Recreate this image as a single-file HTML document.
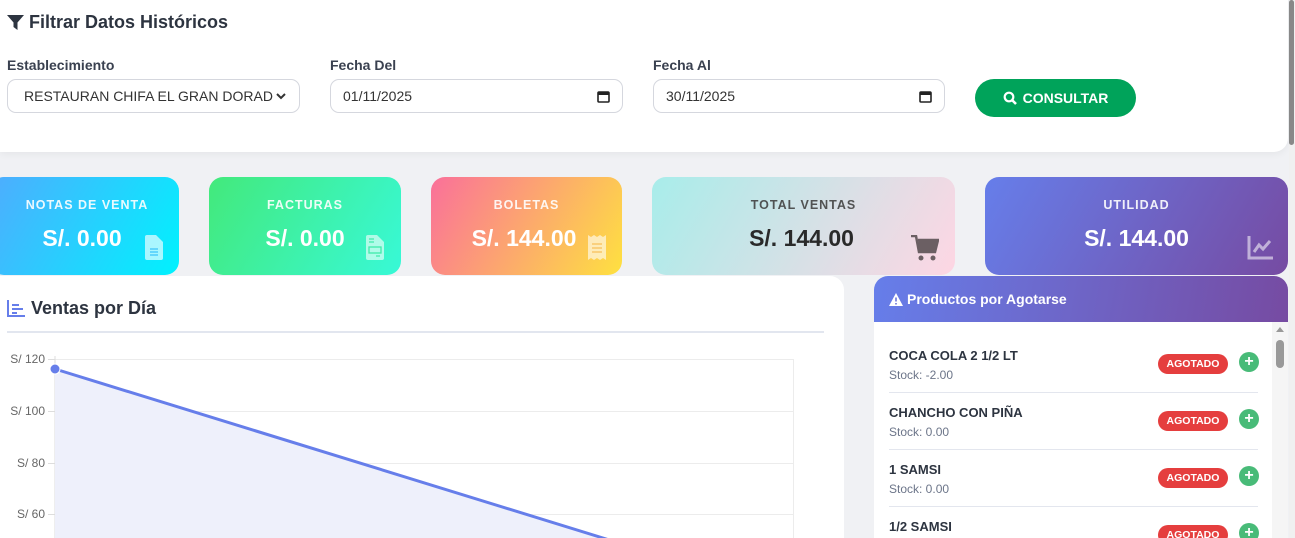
<!DOCTYPE html>
<html><head><meta charset="utf-8"><style>
*{box-sizing:border-box;margin:0;padding:0}
html,body{width:1295px;height:538px;overflow:hidden}
body{background:#f0f1f4;font-family:"Liberation Sans",Arial,sans-serif;position:relative}
.abs{position:absolute}
.filter{left:0;top:0;width:1288px;height:152px;background:#fff;border-radius:0 0 14px 0;box-shadow:0 2px 8px rgba(0,0,0,.05)}
.h{font-weight:bold;color:#2d3440;font-size:18px}
.lbl{font-size:14px;font-weight:bold;color:#3a4150}
.inp{height:34px;border:1px solid #d5d7de;border-radius:9px;background:#fff;font-size:14px;color:#333;padding:0 12px;display:flex;align-items:center;justify-content:space-between}
.btn{left:975px;top:79px;width:161px;height:38px;border-radius:19px;background:#00a35a;color:#fff;font-weight:bold;font-size:14px;display:flex;align-items:center;justify-content:center;gap:6px}
.card{top:177px;height:98px;border-radius:14px;text-align:center;color:#fff}
.card .t{position:absolute;top:21px;left:0;right:0;font-size:12.5px;font-weight:bold;letter-spacing:1px;opacity:.9}
.card .v{position:absolute;top:48px;left:0;right:0;font-size:23px;font-weight:bold}
.chart{left:0;top:276px;width:844px;height:262px;background:#fff;border-radius:0 14px 0 0;overflow:hidden}
.prod{left:874px;top:276px;width:414px;height:262px;background:#fff;border-radius:14px 14px 0 0;overflow:hidden}
.ph{height:46px;background:linear-gradient(100deg,#667eea,#764ba2);color:#fff;font-weight:bold;font-size:14px;padding:14px 15px}
.item{position:absolute;left:15px;width:369px;height:57px;border-bottom:1px solid #e3e6ee}
.item .n{position:absolute;top:12px;font-size:13px;color:#2d3440;font-weight:bold}
.item .s{position:absolute;top:32px;font-size:12px;color:#6c7589}
.badge{position:absolute;left:269px;width:70px;height:20px;border-radius:10px;background:#e53e3e;color:#fff;font-size:10.5px;font-weight:bold;text-align:center;line-height:20px}
.plus{position:absolute;left:350px;width:20px;height:20px;border-radius:50%;background:#48bb78;color:#fff;font-weight:bold;font-size:16px;text-align:center;line-height:19px}
</style></head><body>
<div class="abs filter">
 <div class="abs h" style="left:7px;top:12px;display:flex;align-items:center;gap:5px"><svg width="17" height="16" viewBox="0 0 17 16"><path d="M0 0H17L10.5 7.5V15L6.5 12V7.5Z" fill="#2d3440"/></svg>Filtrar Datos Históricos</div>
 <div class="abs lbl" style="left:7px;top:57px">Establecimiento</div>
 <div class="abs inp" style="left:7px;top:79px;width:293px;padding-left:16px">RESTAURAN CHIFA EL GRAN DORAD<svg width="12" height="8" viewBox="0 0 12 8"><path d="M2 2L6 6L10 2" stroke="#333" stroke-width="2" fill="none"/></svg></div>
 <div class="abs lbl" style="left:330px;top:57px">Fecha Del</div>
 <div class="abs inp" style="left:330px;top:79px;width:293px">01/11/2025<svg width="13" height="13" viewBox="0 0 13 13"><rect x="1" y="2" width="11" height="10" rx="1" fill="none" stroke="#222" stroke-width="1.6"/><rect x="1" y="2" width="11" height="3" fill="#222"/></svg></div>
 <div class="abs lbl" style="left:653px;top:57px">Fecha Al</div>
 <div class="abs inp" style="left:653px;top:79px;width:292px">30/11/2025<svg width="13" height="13" viewBox="0 0 13 13"><rect x="1" y="2" width="11" height="10" rx="1" fill="none" stroke="#222" stroke-width="1.6"/><rect x="1" y="2" width="11" height="3" fill="#222"/></svg></div>
 <div class="abs btn"><svg width="14" height="14" viewBox="0 0 14 14"><circle cx="6" cy="6" r="4.3" stroke="#fff" stroke-width="2.2" fill="none"/><path d="M9 9L13 13" stroke="#fff" stroke-width="2.6"/></svg>CONSULTAR</div>
</div>
<div class="abs" style="left:1289px;top:0;width:6px;height:538px;background:#f0f0f0"></div>
<div class="abs" style="left:1289px;top:0;width:5px;height:145px;background:#888;border-radius:3px"></div>

<div class="abs card" style="left:-10px;width:189px;background:linear-gradient(120deg,#4facfe,#00f2fe)"><div class="t" style="left:5px">NOTAS DE VENTA</div><div class="v" style="left:-5px">S/. 0.00</div>
<svg class="abs" style="left:155px;top:58px" width="18" height="25" viewBox="0 0 18 25"><path d="M0 2Q0 0 2 0H11L18 7V23Q18 25 16 25H2Q0 25 0 23Z" fill="#fff" opacity=".65"/><path d="M5 14H13M5 17H13M5 20H13" stroke="#3cc4f9" stroke-width="1.3"/></svg></div>
<div class="abs card" style="left:209px;width:192px;background:linear-gradient(120deg,#43e97b,#38f9d7)"><div class="t">FACTURAS</div><div class="v">S/. 0.00</div>
<svg class="abs" style="left:157px;top:58px" width="18" height="25" viewBox="0 0 18 25"><path d="M0 2Q0 0 2 0H11L18 7V23Q18 25 16 25H2Q0 25 0 23Z" fill="#fff" opacity=".6"/><rect x="3" y="12" width="12" height="6" fill="none" stroke="#3fecaa" stroke-width="1.3"/><path d="M3 4H8M3 7H8M10 21H14" stroke="#3fecaa" stroke-width="1.3"/></svg></div>
<div class="abs card" style="left:431px;width:191px;background:linear-gradient(120deg,#fa709a,#fee140)"><div class="t">BOLETAS</div><div class="v" style="left:-5px">S/. 144.00</div>
<svg class="abs" style="left:157px;top:58px" width="18" height="25" viewBox="0 0 18 25"><path d="M0 0L3 2L6 0L9 2L12 0L15 2L18 0V25L15 23L12 25L9 23L6 25L3 23L0 25Z" fill="#fff" opacity=".6"/><path d="M4 9H14M4 13H14M4 17H14" stroke="#f8c05a" stroke-width="1.3"/></svg></div>
<div class="abs card" style="left:652px;width:303px;background:linear-gradient(120deg,#a8edea,#fed6e3);color:#333"><div class="t" style="color:#444">TOTAL VENTAS</div><div class="v" style="color:#2a2a2a;left:-4px">S/. 144.00</div>
<svg class="abs" style="left:259px;top:58px" width="28" height="26" viewBox="0 0 28 26"><path d="M0 1H5L8 17H24L27 5H7" fill="none" stroke="#6b5f63" stroke-width="2.5"/><path d="M7 5H27L24 17H8Z" fill="#6b5f63"/><circle cx="10" cy="23" r="2.5" fill="#6b5f63"/><circle cx="22" cy="23" r="2.5" fill="#6b5f63"/></svg></div>
<div class="abs card" style="left:985px;width:303px;background:linear-gradient(120deg,#667eea,#764ba2)"><div class="t">UTILIDAD</div><div class="v">S/. 144.00</div>
<svg class="abs" style="left:262px;top:59px" width="26" height="24" viewBox="0 0 26 24"><path d="M2 0V22H26" fill="none" stroke="#fff" stroke-width="3" opacity=".55"/><path d="M7 16L12 9L16 13L23 5" fill="none" stroke="#fff" stroke-width="3" opacity=".55"/></svg></div>

<div class="abs chart">
 <div class="abs h" style="left:7px;top:22px;display:flex;align-items:center;gap:6px"><svg width="18" height="17" viewBox="0 0 18 17"><path d="M1 0V16H18" fill="none" stroke="#667eea" stroke-width="2"/><path d="M5 5H12M5 9H16M5 13H10" stroke="#667eea" stroke-width="2"/></svg>Ventas por Día</div>
 <div class="abs" style="left:7px;top:55px;width:817px;height:2px;background:#e2e6ef"></div>
 <svg class="abs" style="left:0;top:0" width="844" height="270">
  <g stroke="#ececec" stroke-width="1"><path d="M55 83.5H793M55 135.5H793M55 187.5H793M55 238.5H793"/><path d="M793.5 83V270"/></g>
  <path d="M55 80V270" stroke="#ddd"/>
  <path d="M48 83.5H55M48 135.5H55M48 187.5H55M48 238.5H55" stroke="#ddd"/>
  <path d="M55 93L603 262L640 270H55Z" fill="#eef0fb"/>
  <path d="M55 93L603 262L640 274" stroke="#667eea" stroke-width="3" fill="none"/>
  <circle cx="55" cy="93" r="5" fill="#667eea" stroke="#fff" stroke-width="1"/>
  <g font-size="12" fill="#666" text-anchor="end" font-family="Liberation Sans"><text x="45" y="87">S/ 120</text><text x="45" y="139">S/ 100</text><text x="45" y="191">S/ 80</text><text x="45" y="242">S/ 60</text></g>
 </svg>
</div>

<div class="abs prod">
 <div class="ph" style="display:flex;align-items:center;gap:4px;padding-top:0;padding-bottom:0"><svg width="14" height="13" viewBox="0 0 14 13"><path d="M7 0L14 13H0Z" fill="#fff"/><path d="M7 4.5V8.5M7 10V11.5" stroke="#6b73d8" stroke-width="1.6"/></svg>Productos por Agotarse</div>
 <div class="abs" style="left:398px;top:46px;width:16px;height:230px;background:#f5f5f5"></div>
 <div class="abs" style="left:402px;top:51px;width:0;height:0;border-left:4px solid transparent;border-right:4px solid transparent;border-bottom:5px solid #999"></div>
 <div class="abs" style="left:402px;top:64px;width:8px;height:28px;border-radius:4px;background:#999"></div>
 <div class="item" style="top:60px"><div class="n">COCA COLA 2 1/2 LT</div><div class="s">Stock: -2.00</div><div class="badge" style="top:18px">AGOTADO</div><div class="plus" style="top:16px">+</div></div>
 <div class="item" style="top:117px"><div class="n">CHANCHO CON PIÑA</div><div class="s">Stock: 0.00</div><div class="badge" style="top:18px">AGOTADO</div><div class="plus" style="top:16px">+</div></div>
 <div class="item" style="top:174px"><div class="n">1 SAMSI</div><div class="s">Stock: 0.00</div><div class="badge" style="top:18px">AGOTADO</div><div class="plus" style="top:16px">+</div></div>
 <div class="item" style="top:231px;border:none"><div class="n">1/2 SAMSI</div><div class="badge" style="top:18px">AGOTADO</div><div class="plus" style="top:16px">+</div></div>
</div>
</body></html>
